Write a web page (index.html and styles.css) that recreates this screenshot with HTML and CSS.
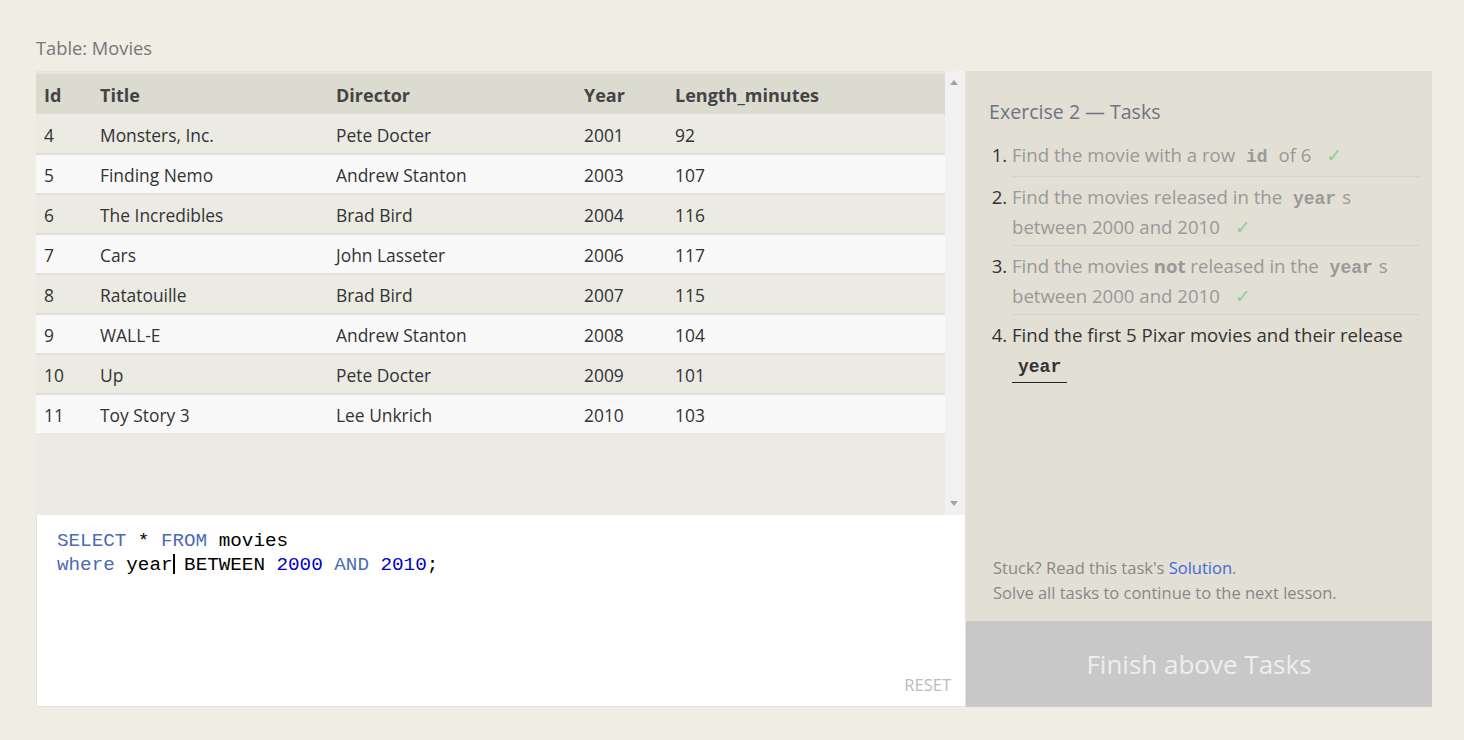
FILE: index.html
```html
<!DOCTYPE html>
<html>
<head>
<meta charset="utf-8">
<link rel="stylesheet" href="styles.css">
</head>
<body>
<div class="page">
  <div class="table-label">Table: Movies</div>
  <div class="workspace">
    <div class="left">
      <div class="table-area">
        <div class="table-wrap">
          <table class="movies">
            <thead>
              <tr><th class="c-id">Id</th><th class="c-title">Title</th><th class="c-dir">Director</th><th class="c-year">Year</th><th>Length_minutes</th></tr>
            </thead>
            <tbody>
              <tr><td>4</td><td>Monsters, Inc.</td><td>Pete Docter</td><td>2001</td><td>92</td></tr>
              <tr><td>5</td><td>Finding Nemo</td><td>Andrew Stanton</td><td>2003</td><td>107</td></tr>
              <tr><td>6</td><td>The Incredibles</td><td>Brad Bird</td><td>2004</td><td>116</td></tr>
              <tr><td>7</td><td>Cars</td><td>John Lasseter</td><td>2006</td><td>117</td></tr>
              <tr><td>8</td><td>Ratatouille</td><td>Brad Bird</td><td>2007</td><td>115</td></tr>
              <tr><td>9</td><td>WALL-E</td><td>Andrew Stanton</td><td>2008</td><td>104</td></tr>
              <tr><td>10</td><td>Up</td><td>Pete Docter</td><td>2009</td><td>101</td></tr>
              <tr><td>11</td><td>Toy Story 3</td><td>Lee Unkrich</td><td>2010</td><td>103</td></tr>
            </tbody>
          </table>
        </div>
        <div class="scrollbar">
          <span class="arrow-up"></span>
          <span class="arrow-down"></span>
        </div>
      </div>
      <div class="editor">
        <pre class="code"><span class="kw">SELECT</span> * <span class="kw">FROM</span> movies
<span class="kw">where</span> year<span class="caret"></span> BETWEEN <span class="num">2000</span> <span class="kw">AND</span> <span class="num">2010</span>;</pre>
        <div class="reset">RESET</div>
      </div>
    </div>
    <div class="right">
      <div class="tasks">
        <h3 class="tasks-title">Exercise 2 — Tasks</h3>
        <ol class="task-list">
          <li class="done first"><span class="t">Find the movie with a row <code>id</code> of 6 <span class="check">✓</span></span></li>
          <li class="done"><span class="t">Find the movies released in the <code>year</code>s between 2000 and 2010 <span class="check">✓</span></span></li>
          <li class="done"><span class="t">Find the movies <b>not</b> released in the <code>year</code>s between 2000 and 2010 <span class="check">✓</span></span></li>
          <li class="current"><span class="t">Find the first 5 Pixar movies and their release <code class="active">year</code></span></li>
        </ol>
      </div>
      <div class="help">
        <p>Stuck? Read this task's <a class="link">Solution</a>.</p>
        <p>Solve all tasks to continue to the next lesson.</p>
      </div>
      <div class="finish">Finish above Tasks</div>
    </div>
  </div>
</div>
</body>
</html>
```

FILE: styles.css
```css
* { box-sizing: border-box; }
html, body {
  margin: 0;
  padding: 0;
  background: #f0ede5;
  font-family: "Open Sans", "Noto Sans", sans-serif;
}
.page {
  padding: 36px 32px 0 36px;
  width: 1464px;
  height: 740px;
}
.table-label {
  font-size: 18.3px;
  color: #777;
  line-height: 24px;
  height: 35px;
}
.workspace {
  display: flex;
  width: 1396px;
  height: 636px;
}
.left {
  width: 930px;
  display: flex;
  flex-direction: column;
}
.table-area {
  height: 444px;
  display: flex;
  background: #ebeae3;
  border-top: 3px solid #e6e4dc;
}
.table-wrap {
  flex: 1;
}
.movies {
  border-collapse: collapse;
  width: 100%;
  font-size: 17.4px;
  color: #333;
}
.movies th {
  text-align: left;
  font-weight: 700;
  color: #444;
  background: #dcdbd0;
  height: 40px;
  padding: 2px 0 0 8px;
  font-size: 18px;
}
.movies td {
  height: 40px;
  padding: 2px 0 0 8px;
  border-bottom: 2px solid #e0dfda;
}
.movies tbody tr:nth-child(odd) td { background: #ebeae3; }
.movies tbody tr:nth-child(even) td { background: #f9f9f9; }
.movies tbody tr:last-child td { border-bottom: 0; height: 39px; }
.c-id { width: 56px; }
.c-title { width: 236px; }
.c-dir { width: 248px; }
.c-year { width: 91px; }
.scrollbar {
  width: 21px;
  background: #f1f1f1;
  position: relative;
  margin-top: -3px;
  border-right: 1px solid #e8e6de;
}
.arrow-up, .arrow-down {
  position: absolute;
  left: 5px;
  width: 0;
  height: 0;
  border-left: 4px solid transparent;
  border-right: 4px solid transparent;
}
.arrow-up { top: 9px; border-bottom: 5px solid #a3a3a3; }
.arrow-down { bottom: 9px; border-top: 5px solid #a3a3a3; }
.editor {
  flex: 1;
  background: #fff;
  border: 1px solid #e4e2dc;
  border-top: 0;
  position: relative;
  padding: 14px 20px;
}
.code {
  margin: 0;
  font-family: "Liberation Mono", "DejaVu Sans Mono", monospace;
  font-size: 19.25px;
  line-height: 24px;
  color: #000;
}
.kw { color: #4a6bb5; }
.num { color: #0000cd; }
.caret {
  display: inline-block;
  width: 2px;
  height: 20px;
  background: #000;
  vertical-align: -4px;
  margin-right: -2px;
}
.reset {
  position: absolute;
  right: 14px;
  bottom: 10px;
  font-size: 16.5px;
  color: #bbb;
}
.right {
  flex: 1;
  background: #e2dfd4;
  display: flex;
  flex-direction: column;
}
.tasks {
  flex: 1;
  padding: 27px 12px 0 23px;
}
.tasks-title {
  margin: 0;
  font-size: 19.6px;
  font-weight: 400;
  color: #6f7380;
  line-height: 28px;
  height: 37px;
}
.task-list {
  margin: 0;
  padding: 0 0 0 23px;
  font-size: 18.6px;
  color: #333;
}
.task-list li {
  padding: 5px 0 3px 0;
  line-height: 30px;
  border-bottom: 1px solid #d6d3c8;
}
.task-list li.first { padding-bottom: 6px; }
.task-list li.current { border-bottom: 0; }
.done .t { color: #999; }
.current .t { color: #333; }
.task-list code {
  font-family: "Liberation Mono", "DejaVu Sans Mono", monospace;
  font-weight: 700;
  font-size: 18px;
  line-height: 1;
  padding: 0 6px;
}
.done code { color: #999; }
.task-list code.active {
  display: inline-block;
  color: #333;
  border-bottom: 1px solid #222;
  padding-bottom: 5px;
  line-height: 20px;
}
.task-list b { font-weight: 700; }
.check {
  color: #8dcf95;
  margin-left: 10px;
  font-family: "DejaVu Sans", sans-serif;
  font-size: 19px;
  line-height: 1;
}
.help {
  padding: 0 20px 16px 27px;
  font-size: 16.5px;
  color: #888;
  line-height: 25px;
}
.help p { margin: 0; line-height: 25px; height: 25px; }
.link { color: #3f6ad8; }
.finish {
  height: 86px;
  background: #c8c8c8;
  color: #eeeeee;
  font-size: 26px;
  display: flex;
  align-items: center;
  justify-content: center;
}
```
